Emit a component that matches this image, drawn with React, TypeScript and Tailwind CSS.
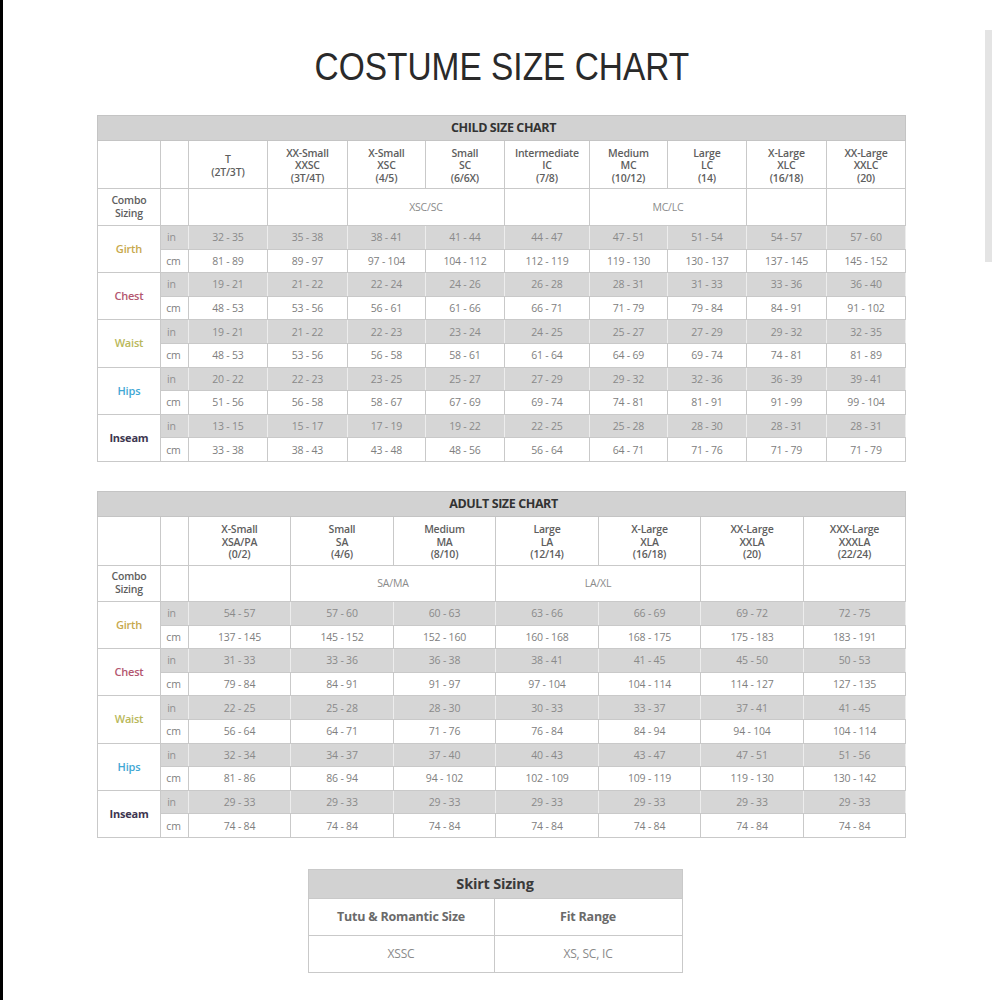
import React from 'react';

type Measure = {
  label: string;
  color: string;
  bold?: boolean;
  inch: string[];
  cm: string[];
};

type Combo = { text: string; span: number };

const r = (s: string) => s.replace('-', ' - ');

const childSizes = [
  ['T', '(2T/3T)'],
  ['XX-Small', 'XXSC', '(3T/4T)'],
  ['X-Small', 'XSC', '(4/5)'],
  ['Small', 'SC', '(6/6X)'],
  ['Intermediate', 'IC', '(7/8)'],
  ['Medium', 'MC', '(10/12)'],
  ['Large', 'LC', '(14)'],
  ['X-Large', 'XLC', '(16/18)'],
  ['XX-Large', 'XXLC', '(20)'],
];

const childWidths = [79, 80, 78, 79, 85, 78, 79, 80, 79];

const childCombo: Combo[] = [
  { text: '', span: 1 },
  { text: '', span: 1 },
  { text: 'XSC/SC', span: 2 },
  { text: '', span: 1 },
  { text: 'MC/LC', span: 2 },
  { text: '', span: 1 },
  { text: '', span: 1 },
];

const childRows: Measure[] = [
  {
    label: 'Girth',
    color: 'text-[#c7a84c]',
    inch: ['32-35', '35-38', '38-41', '41-44', '44-47', '47-51', '51-54', '54-57', '57-60'],
    cm: ['81-89', '89-97', '97-104', '104-112', '112-119', '119-130', '130-137', '137-145', '145-152'],
  },
  {
    label: 'Chest',
    color: 'text-[#b3566f]',
    inch: ['19-21', '21-22', '22-24', '24-26', '26-28', '28-31', '31-33', '33-36', '36-40'],
    cm: ['48-53', '53-56', '56-61', '61-66', '66-71', '71-79', '79-84', '84-91', '91-102'],
  },
  {
    label: 'Waist',
    color: 'text-[#b9b85a]',
    inch: ['19-21', '21-22', '22-23', '23-24', '24-25', '25-27', '27-29', '29-32', '32-35'],
    cm: ['48-53', '53-56', '56-58', '58-61', '61-64', '64-69', '69-74', '74-81', '81-89'],
  },
  {
    label: 'Hips',
    color: 'text-[#41a7d4]',
    inch: ['20-22', '22-23', '23-25', '25-27', '27-29', '29-32', '32-36', '36-39', '39-41'],
    cm: ['51-56', '56-58', '58-67', '67-69', '69-74', '74-81', '81-91', '91-99', '99-104'],
  },
  {
    label: 'Inseam',
    color: 'text-[#3d3650]',
    bold: true,
    inch: ['13-15', '15-17', '17-19', '19-22', '22-25', '25-28', '28-30', '28-31', '28-31'],
    cm: ['33-38', '38-43', '43-48', '48-56', '56-64', '64-71', '71-76', '71-79', '71-79'],
  },
];

const adultSizes = [
  ['X-Small', 'XSA/PA', '(0/2)'],
  ['Small', 'SA', '(4/6)'],
  ['Medium', 'MA', '(8/10)'],
  ['Large', 'LA', '(12/14)'],
  ['X-Large', 'XLA', '(16/18)'],
  ['XX-Large', 'XXLA', '(20)'],
  ['XXX-Large', 'XXXLA', '(22/24)'],
];

const adultWidths = [102, 103, 102, 103, 102, 103, 102];

const adultCombo: Combo[] = [
  { text: '', span: 1 },
  { text: 'SA/MA', span: 2 },
  { text: 'LA/XL', span: 2 },
  { text: '', span: 1 },
  { text: '', span: 1 },
];

const adultRows: Measure[] = [
  {
    label: 'Girth',
    color: 'text-[#c7a84c]',
    inch: ['54-57', '57-60', '60-63', '63-66', '66-69', '69-72', '72-75'],
    cm: ['137-145', '145-152', '152-160', '160-168', '168-175', '175-183', '183-191'],
  },
  {
    label: 'Chest',
    color: 'text-[#b3566f]',
    inch: ['31-33', '33-36', '36-38', '38-41', '41-45', '45-50', '50-53'],
    cm: ['79-84', '84-91', '91-97', '97-104', '104-114', '114-127', '127-135'],
  },
  {
    label: 'Waist',
    color: 'text-[#b9b85a]',
    inch: ['22-25', '25-28', '28-30', '30-33', '33-37', '37-41', '41-45'],
    cm: ['56-64', '64-71', '71-76', '76-84', '84-94', '94-104', '104-114'],
  },
  {
    label: 'Hips',
    color: 'text-[#41a7d4]',
    inch: ['32-34', '34-37', '37-40', '40-43', '43-47', '47-51', '51-56'],
    cm: ['81-86', '86-94', '94-102', '102-109', '109-119', '119-130', '130-142'],
  },
  {
    label: 'Inseam',
    color: 'text-[#3d3650]',
    bold: true,
    inch: Array(7).fill('29-33'),
    cm: Array(7).fill('74-84'),
  },
];

const cell = 'border border-[#c9c9c9] text-center align-middle p-0';

function SizeChart({
  title,
  sizes,
  widths,
  combo,
  rows,
  headerH,
  comboH,
}: {
  title: string;
  sizes: string[][];
  widths: number[];
  combo: Combo[];
  rows: Measure[];
  headerH: string;
  comboH: string;
}) {
  return (
    <table className="w-[808px] table-fixed border-collapse border border-[#bdbdbd] text-[10.5px] leading-[12px] tracking-[-0.2px] text-[#808080]">
      <colgroup>
        <col className="w-[63px]" />
        <col className="w-[28px]" />
        {widths.map((w, i) => (
          <col key={i} style={{ width: w }} />
        ))}
      </colgroup>
      <tbody>
        <tr className="h-[25px] bg-[#d2d2d2]">
          <td
            colSpan={widths.length + 2}
            className="border border-[#c4c4c4] pl-[4px] text-center text-[12.5px] font-bold tracking-[-0.4px] text-[#333]"
          >
            {title}
          </td>
        </tr>
        <tr className={headerH}>
          <td className={cell} />
          <td className={cell} />
          {sizes.map((s, i) => (
            <td key={i} className={`${cell} pt-[2px] font-semibold leading-[12.5px] text-[#5e5e5e]`}>
              {s.map((line, j) => (
                <div key={j}>{line}</div>
              ))}
            </td>
          ))}
        </tr>
        <tr className={comboH}>
          <td className={`${cell} font-semibold leading-[13px] text-[#5e5e5e]`}>
            <div>Combo</div>
            <div>Sizing</div>
          </td>
          <td className={cell} />
          {combo.map((c, i) => (
            <td key={i} colSpan={c.span} className={`${cell} text-[#8a8a8a]`}>
              {c.text}
            </td>
          ))}
        </tr>
        {rows.map((m) => (
          <React.Fragment key={m.label}>
            <tr className="h-[23.6px] bg-[#d6d6d6]">
              <td
                rowSpan={2}
                className={`${cell} bg-white text-[11px] ${m.bold ? 'font-bold' : 'font-semibold'} ${m.color}`}
              >
                {m.label}
              </td>
              <td className={`${cell} border-x-[#ededed] pr-[6px] text-[#909090]`}>in</td>
              {m.inch.map((v, i) => (
                <td key={i} className={`${cell} border-x-[#ededed] text-[#8a8a8a]`}>
                  {r(v)}
                </td>
              ))}
            </tr>
            <tr className="h-[23.6px] bg-white">
              <td className={`${cell} pr-[2px]`}>cm</td>
              {m.cm.map((v, i) => (
                <td key={i} className={cell}>
                  {r(v)}
                </td>
              ))}
            </tr>
          </React.Fragment>
        ))}
      </tbody>
    </table>
  );
}

export default function App() {
  return (
    <div
      className="relative flex h-[1000px] w-[1000px] flex-col items-center overflow-hidden border-l-[3px] border-black bg-white"
      style={{ fontFamily: '"Open Sans", "Noto Sans", sans-serif' }}
    >
      <h1
        className="mt-[44px] mb-[25px] scale-x-[0.88] text-[38px] leading-[46px] font-normal text-[#2a2a2a]"
        style={{ fontFamily: '"Liberation Sans", Arial, sans-serif' }}
      >
        COSTUME SIZE CHART
      </h1>

      <SizeChart
        title="CHILD SIZE CHART"
        sizes={childSizes}
        widths={childWidths}
        combo={childCombo}
        rows={childRows}
        headerH="h-[48px]"
        comboH="h-[37px]"
      />

      <div className="h-[29px]" />

      <SizeChart
        title="ADULT SIZE CHART"
        sizes={adultSizes}
        widths={adultWidths}
        combo={adultCombo}
        rows={adultRows}
        headerH="h-[49px]"
        comboH="h-[36px]"
      />

      <div className="h-[31px]" />

      <table className="ml-[-13px] w-[374px] table-fixed border-collapse border border-[#bdbdbd] text-[12px] tracking-[-0.2px] text-[#8a8a8a]">
        <colgroup>
          <col className="w-[186px]" />
          <col className="w-[188px]" />
        </colgroup>
        <tbody>
          <tr className="h-[29px] bg-[#d2d2d2]">
            <td colSpan={2} className={`${cell} text-[14.5px] font-bold text-[#3a3a3a]`}>
              Skirt Sizing
            </td>
          </tr>
          <tr className="h-[37px]">
            <td className={`${cell} text-[12.5px] font-bold text-[#6a6a6a]`}>Tutu &amp; Romantic Size</td>
            <td className={`${cell} text-[12.5px] font-bold text-[#6a6a6a]`}>Fit Range</td>
          </tr>
          <tr className="h-[37px]">
            <td className={cell}>XSSC</td>
            <td className={cell}>XS, SC, IC</td>
          </tr>
        </tbody>
      </table>

      <div className="absolute top-[30px] right-[8px] h-[232px] w-[7px] bg-[#e4e4e4]" />
    </div>
  );
}
